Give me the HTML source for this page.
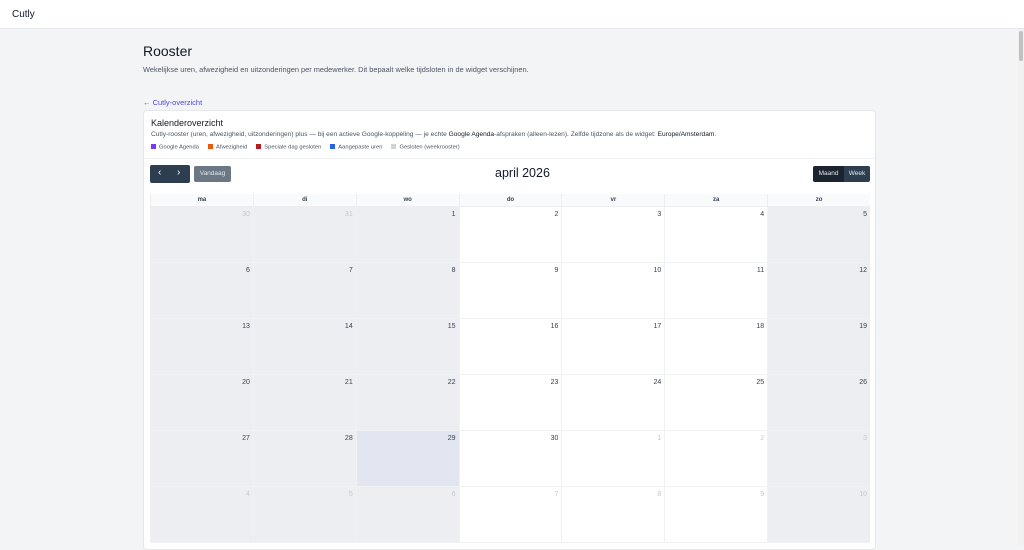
<!DOCTYPE html><html><head><meta charset="utf-8"><style>
*{box-sizing:border-box;margin:0;padding:0}
body{width:1024px;height:545px;overflow:hidden;background:#f3f4f6;font-family:"Liberation Sans",sans-serif;position:relative;color:#111827}
.top{position:absolute;left:0;top:0;width:1024px;height:29px;background:#fff;border-bottom:1px solid #e5e7eb;font-size:10px;padding:9px 0 0 12px}
.sb{position:absolute;right:0;top:29px;width:6px;height:516px;background:#f1f1f1}
.sb div{position:absolute;left:1px;top:2px;width:4px;height:30px;background:#c1c1c1;border-radius:2px}
h1{position:absolute;left:143px;top:43px;font-size:14px;font-weight:normal}
.sub{position:absolute;left:143px;top:65px;font-size:7.4px;color:#4b5563}
.back{position:absolute;left:143px;top:98px;font-size:7.5px;color:#4f46e5}
.card{position:absolute;left:143px;top:110px;width:733px;height:440px;background:#fff;border-radius:4px;border:1px solid #e5e7eb}
.kt{position:absolute;left:151px;top:118px;font-size:9px}
.kd{position:absolute;left:151px;top:131px;font-size:6.6px;color:#4b5563;white-space:nowrap}
.kd b{color:#111827;font-weight:normal}
.leg{position:absolute;left:151px;top:144px;font-size:5.8px;color:#4b5563;display:flex;gap:9px}
.leg span i{display:inline-block;width:5px;height:5px;margin-right:3px;vertical-align:-0.5px}
.hr{position:absolute;left:144px;top:158px;width:731px;height:1px;background:#eef0f2}
.nav{position:absolute;left:150px;top:165px;width:40px;height:18px;background:#2c3e50;border-radius:2px;color:#fff;font-size:10px}
.nav span{position:absolute;top:2px}
.vd{position:absolute;left:194px;top:166px;width:37px;height:16px;background:#6b7785;border-radius:2px;color:#e5e7eb;font-size:6.5px;text-align:center;line-height:16px}
.title{position:absolute;left:495px;top:166px;font-size:12.5px}
.vw{position:absolute;left:813px;top:166px;width:57px;height:16px;border-radius:2px;overflow:hidden;display:flex;font-size:6.5px;color:#e5e7eb;line-height:16px}
.vw div:first-child{background:#1a252f;width:31px;text-align:center}
.vw div:last-child{background:#2c3e50;flex:1;text-align:center}
.grid{position:absolute;left:150px;top:194px;width:720px}
.hd{display:flex;height:13px;background:#f9fafb;border-bottom:1px solid #eceef1}
.hd div{flex:1;text-align:center;font-size:6px;font-weight:bold;color:#374151;line-height:13px;border-left:1px solid #eceef1}
.row{display:flex;height:56px;border-bottom:1px solid #f0f1f3}
.row div{flex:1;border-left:1px solid #f0f1f3;text-align:right;padding:4px 3px 0 0;font-size:7px;color:#374151}
.g{background:#edeef1}.t{background:#e3e6f1}.o{color:#c4c7cc!important}
</style></head><body>
<div class="top">Cutly</div><div class="sb"><div></div></div>
<h1>Rooster</h1>
<div class="sub">Wekelijkse uren, afwezigheid en uitzonderingen per medewerker. Dit bepaalt welke tijdsloten in de widget verschijnen.</div>
<div class="back">← Cutly-overzicht</div>
<div class="card"></div>
<div class="kt">Kalenderoverzicht</div>
<div class="kd">Cutly-rooster (uren, afwezigheid, uitzonderingen) plus — bij een actieve Google-koppeling — je echte <b>Google Agenda</b>-afspraken (alleen-lezen). Zelfde tijdzone als de widget: <b>Europe/Amsterdam</b>.</div>
<div class="leg"><span><i style="background:#7c3aed"></i>Google Agenda</span><span><i style="background:#ea580c"></i>Afwezigheid</span><span><i style="background:#b91c1c"></i>Speciale dag gesloten</span><span><i style="background:#2563eb"></i>Aangepaste uren</span><span><i style="background:#d1d5db"></i>Gesloten (weekrooster)</span></div>
<div class="hr"></div>
<div class="nav"><span style="left:8px">‹</span><span style="left:27px">›</span></div>
<div class="vd">Vandaag</div>
<div class="title">april 2026</div>
<div class="vw"><div>Maand</div><div>Week</div></div>
<div class="grid">
<div class="hd"><div>ma</div><div>di</div><div>wo</div><div>do</div><div>vr</div><div>za</div><div>zo</div></div>
<div class="row"><div class="g o">30</div><div class="g o">31</div><div class="g">1</div><div>2</div><div>3</div><div>4</div><div class="g">5</div></div>
<div class="row"><div class="g">6</div><div class="g">7</div><div class="g">8</div><div>9</div><div>10</div><div>11</div><div class="g">12</div></div>
<div class="row"><div class="g">13</div><div class="g">14</div><div class="g">15</div><div>16</div><div>17</div><div>18</div><div class="g">19</div></div>
<div class="row"><div class="g">20</div><div class="g">21</div><div class="g">22</div><div>23</div><div>24</div><div>25</div><div class="g">26</div></div>
<div class="row"><div class="g">27</div><div class="g">28</div><div class="t">29</div><div>30</div><div class="o">1</div><div class="o">2</div><div class="g o">3</div></div>
<div class="row"><div class="g o">4</div><div class="g o">5</div><div class="g o">6</div><div class="o">7</div><div class="o">8</div><div class="o">9</div><div class="g o">10</div></div>
</div>
</body></html>
